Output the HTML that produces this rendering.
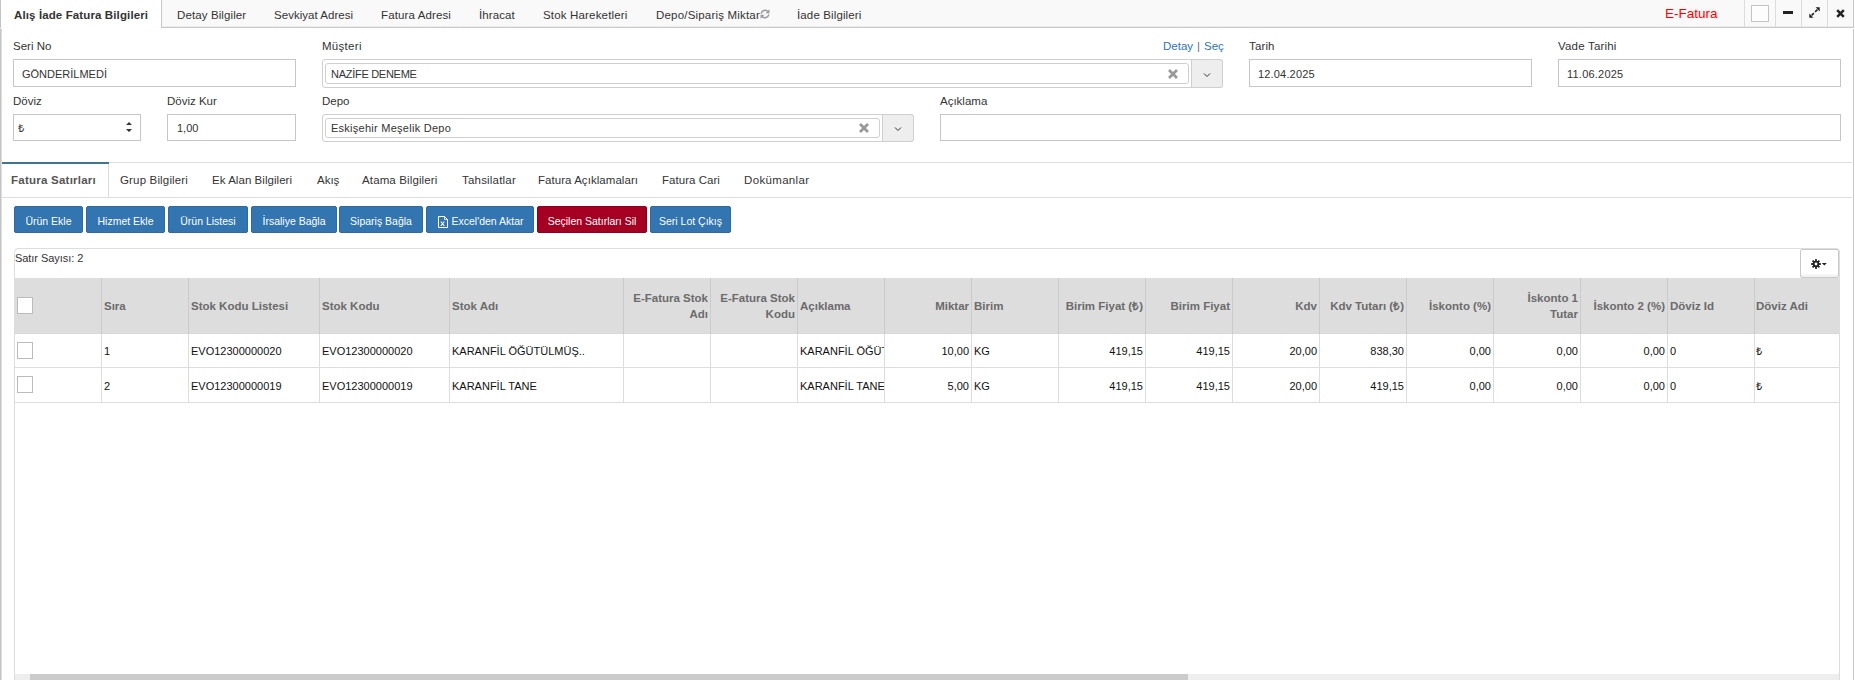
<!DOCTYPE html>
<html><head><meta charset="utf-8">
<style>
*{box-sizing:border-box}
html,body{margin:0;padding:0}
body{width:1855px;height:680px;overflow:hidden;background:#fff;position:relative;font-family:"Liberation Sans",sans-serif;font-size:11px;color:#333}
.a{position:absolute;white-space:nowrap}
.t{line-height:13px}
.box{position:absolute;border:1px solid #c6c6c6;background:#fff}
.lbl{position:absolute;white-space:nowrap;line-height:13px;font-size:11.5px;color:#333}
.val{position:absolute;white-space:nowrap;line-height:13px;font-size:11px;color:#333}
.btn{position:absolute;top:206px;height:27px;background:#3275b0;border:1px solid #2c6aa0;color:#fff;font-size:10.5px;line-height:27px;padding-top:1px;text-align:center;border-radius:2px}
.hd{position:absolute;font-weight:bold;color:#6b6b6b;font-size:11.5px;line-height:16px;white-space:nowrap}
.cell{position:absolute;font-size:11px;color:#111;line-height:13px;white-space:nowrap}
.vs{position:absolute;width:1px}
</style></head><body>

<!-- modal borders -->
<div class="a" style="left:0;top:0;width:1px;height:680px;background:#c4c4c4"></div>
<div class="a" style="left:1px;top:0;width:1px;height:680px;background:#dedede"></div>
<div class="a" style="left:0;top:28px;width:2px;height:1px;background:#eee"></div>
<div class="a" style="left:1853px;top:29px;width:1px;height:651px;background:#c8c8c8"></div>

<!-- top tab bar -->
<div class="a" style="left:0;top:0;width:1854px;height:28px;background:#f9f9f9;border-bottom:1px solid #c8c8c8;border-right:1px solid #c8c8c8"></div>
<div class="a" style="left:0;top:26px;width:1853px;height:1px;background:#ededed"></div>
<div class="a" style="left:0;top:0;width:162px;height:28px;background:#fff;border-right:1px solid #c8c8c8;border-left:1px solid #c4c4c4"></div>
<div class="a t" style="left:14px;top:9px;font-size:11.5px;font-weight:bold;color:#333;letter-spacing:0.12px">Alış İade Fatura Bilgileri</div>
<div class="a t" style="left:177px;top:9px;font-size:11.5px;letter-spacing:0.11px">Detay Bilgiler</div>
<div class="a t" style="left:274px;top:9px;font-size:11.5px;letter-spacing:0.03px">Sevkiyat Adresi</div>
<div class="a t" style="left:381px;top:9px;font-size:11.5px;letter-spacing:0.12px">Fatura Adresi</div>
<div class="a t" style="left:479px;top:9px;font-size:11.5px;letter-spacing:0.11px">İhracat</div>
<div class="a t" style="left:543px;top:9px;font-size:11.5px;letter-spacing:0.17px">Stok Hareketleri</div>
<div class="a t" style="left:656px;top:9px;font-size:11.5px;letter-spacing:0.19px">Depo/Sipariş Miktar</div>
<svg class="a" style="left:759px;top:8px" width="12" height="12" viewBox="0 0 12 12"><path d="M2.2 5.6A3.9 3.9 0 0 1 9 3.6" fill="none" stroke="#9a9a9a" stroke-width="1.5"/><path d="M10.5 1.2v4h-4z" fill="#9a9a9a"/><path d="M9.8 6.4A3.9 3.9 0 0 1 3 8.4" fill="none" stroke="#9a9a9a" stroke-width="1.5"/><path d="M1.5 10.8v-4h4z" fill="#9a9a9a"/></svg>
<div class="a t" style="left:797px;top:9px;font-size:11.5px;letter-spacing:0.13px">İade Bilgileri</div>
<div class="a" style="left:1665px;top:5px;font-size:13.5px;line-height:17px;color:#f00">E-Fatura</div>

<!-- window buttons -->
<div class="a" style="left:1744px;top:0;width:1px;height:27px;background:#dcdcdc"></div>
<div class="a" style="left:1775px;top:0;width:1px;height:27px;background:#dcdcdc"></div>
<div class="a" style="left:1801px;top:0;width:1px;height:27px;background:#dcdcdc"></div>
<div class="a" style="left:1827px;top:0;width:1px;height:27px;background:#dcdcdc"></div>
<div class="a" style="left:1751px;top:5px;width:18px;height:17px;border:1px solid #c4c4c4;background:#fdfdfd"></div>
<div class="a" style="left:1783px;top:11px;width:10px;height:3px;background:#222"></div>
<svg class="a" style="left:1808px;top:6px" width="13" height="13" viewBox="0 0 13 13"><path d="M3.6 9.4L5.9 7.1M7.1 5.9L9.4 3.6" stroke="#222" stroke-width="1.5"/><path d="M7.6 1.3h4.1v4.1z M1.3 7.6v4.1h4.1z" fill="#222"/></svg>
<svg class="a" style="left:1835px;top:8px" width="11" height="11" viewBox="0 0 11 11"><path d="M2.2 2.2L8.8 8.8M8.8 2.2L2.2 8.8" stroke="#222" stroke-width="2.5"/></svg>

<!-- form row 1 -->
<div class="lbl" style="left:13px;top:40px">Seri No</div>
<div class="box" style="left:13px;top:59px;width:283px;height:28px"></div>
<div class="val" style="left:22px;top:68px">GÖNDERİLMEDİ</div>

<div class="lbl" style="left:322px;top:40px;letter-spacing:0.29px">Müşteri</div>
<div class="a t" style="left:1163px;top:40px;font-size:11.5px;color:#2f74bd">Detay</div>
<div class="a t" style="left:1197px;top:40px;font-size:11.5px;color:#5a6f88">|</div>
<div class="a t" style="left:1204px;top:40px;font-size:11.5px;color:#2f74bd">Seç</div>
<div class="box" style="left:322px;top:59px;width:901px;height:29px;border-radius:3px;border-color:#cfcfcf"></div>
<div class="box" style="left:325px;top:63px;width:864px;height:21px;border-radius:3px;border-color:#cfcfcf"></div>
<div class="val" style="left:331px;top:68px;letter-spacing:-0.28px">NAZİFE DENEME</div>
<svg class="a" style="left:1168px;top:69px" width="10" height="10" viewBox="0 0 10 10"><path d="M2 2L8 8M8 2L2 8" stroke="#999" stroke-width="2.8" stroke-linecap="square"/></svg>
<div class="a" style="left:1191px;top:59px;width:32px;height:29px;background:#eee;border:1px solid #cfcfcf;border-radius:0 3px 3px 0"></div>
<svg class="a" style="left:1203px;top:72px" width="8" height="6" viewBox="0 0 8 6"><path d="M1 1.5L4 4.5L7 1.5" fill="none" stroke="#333" stroke-width="1"/></svg>

<div class="lbl" style="left:1249px;top:40px;letter-spacing:0.14px">Tarih</div>
<div class="box" style="left:1249px;top:59px;width:283px;height:28px"></div>
<div class="val" style="left:1258px;top:68px;letter-spacing:0.17px">12.04.2025</div>

<div class="lbl" style="left:1558px;top:40px;letter-spacing:0.19px">Vade Tarihi</div>
<div class="box" style="left:1558px;top:59px;width:283px;height:28px"></div>
<div class="val" style="left:1567px;top:68px;letter-spacing:0.22px">11.06.2025</div>

<!-- form row 2 -->
<div class="lbl" style="left:13px;top:95px">Döviz</div>
<div class="box" style="left:13px;top:114px;width:128px;height:27px"></div>
<div class="val" style="left:18px;top:122px">₺</div>
<svg class="a" style="left:125px;top:120px" width="8" height="14" viewBox="0 0 8 14"><path d="M1 5L4 2L7 5z M1 9L4 12L7 9z" fill="#333"/></svg>

<div class="lbl" style="left:167px;top:95px">Döviz Kur</div>
<div class="box" style="left:167px;top:114px;width:129px;height:27px"></div>
<div class="val" style="left:177px;top:122px">1,00</div>

<div class="lbl" style="left:322px;top:95px">Depo</div>
<div class="box" style="left:322px;top:114px;width:592px;height:28px;border-radius:3px;border-color:#cfcfcf"></div>
<div class="box" style="left:325px;top:118px;width:555px;height:20px;border-radius:3px;border-color:#cfcfcf"></div>
<div class="val" style="left:331px;top:122px;letter-spacing:0.26px">Eskişehir Meşelik Depo</div>
<svg class="a" style="left:859px;top:123px" width="10" height="10" viewBox="0 0 10 10"><path d="M2 2L8 8M8 2L2 8" stroke="#999" stroke-width="2.8" stroke-linecap="square"/></svg>
<div class="a" style="left:882px;top:114px;width:32px;height:28px;background:#eee;border:1px solid #cfcfcf;border-radius:0 3px 3px 0"></div>
<svg class="a" style="left:894px;top:126px" width="8" height="6" viewBox="0 0 8 6"><path d="M1 1.5L4 4.5L7 1.5" fill="none" stroke="#333" stroke-width="1"/></svg>

<div class="lbl" style="left:940px;top:95px">Açıklama</div>
<div class="box" style="left:940px;top:114px;width:901px;height:27px"></div>

<!-- second tab bar -->
<div class="a" style="left:2px;top:162px;width:1850px;height:1px;background:#ddd"></div>
<div class="a" style="left:2px;top:197px;width:1850px;height:1px;background:#ddd"></div>
<div class="a" style="left:2px;top:162px;width:107px;height:2px;background:#3e7590"></div>
<div class="a" style="left:108px;top:164px;width:1px;height:33px;background:#ddd"></div>
<div class="a t" style="left:11px;top:174px;font-size:11.5px;font-weight:bold;color:#555;letter-spacing:0.24px">Fatura Satırları</div>
<div class="a t" style="left:120px;top:174px;font-size:11.5px;letter-spacing:0.16px">Grup Bilgileri</div>
<div class="a t" style="left:212px;top:174px;font-size:11.5px;letter-spacing:0.05px">Ek Alan Bilgileri</div>
<div class="a t" style="left:317px;top:174px;font-size:11.5px">Akış</div>
<div class="a t" style="left:362px;top:174px;font-size:11.5px;letter-spacing:0.13px">Atama Bilgileri</div>
<div class="a t" style="left:462px;top:174px;font-size:11.5px;letter-spacing:0.2px">Tahsilatlar</div>
<div class="a t" style="left:538px;top:174px;font-size:11.5px;letter-spacing:0.05px">Fatura Açıklamaları</div>
<div class="a t" style="left:662px;top:174px;font-size:11.5px;letter-spacing:0.04px">Fatura Cari</div>
<div class="a t" style="left:744px;top:174px;font-size:11.5px;letter-spacing:0.34px">Dokümanlar</div>

<!-- buttons -->
<div class="btn" style="left:14px;width:69px">Ürün Ekle</div>
<div class="btn" style="left:86px;width:79px">Hizmet Ekle</div>
<div class="btn" style="left:168px;width:80px">Ürün Listesi</div>
<div class="btn" style="left:251px;width:86px">İrsaliye Bağla</div>
<div class="btn" style="left:339px;width:84px">Sipariş Bağla</div>
<div class="btn" style="left:426px;width:108px"><svg style="vertical-align:-3px;margin-right:3px;margin-left:2px" width="10" height="12" viewBox="0 0 10 12"><path d="M0.5 0.5h6l3 3v8h-9z" fill="none" stroke="#fff" stroke-width="1"/><path d="M6.5 0.5v3h3" fill="none" stroke="#fff" stroke-width="0.8"/><path d="M2.8 5.5l3.5 4.5M6.3 5.5l-3.5 4.5" stroke="#fff" stroke-width="1.1"/></svg>Excel'den Aktar</div>
<div class="btn" style="left:537px;width:110px;background:#a50022;border-color:#8e001c">Seçilen Satırları Sil</div>
<div class="btn" style="left:650px;width:81px">Seri Lot Çıkış</div>

<!-- table container -->
<div class="a" style="left:14px;top:248px;width:1826px;height:440px;border:1px solid #ddd;border-radius:4px"></div>
<div class="a t" style="left:15px;top:252px;font-size:11px;letter-spacing:-0.05px">Satır Sayısı: 2</div>
<div class="a" style="left:1800px;top:249px;width:39px;height:29px;background:linear-gradient(#fff 0,#fff 24px,#f2f2f2 25px);border:1px solid #c8c8c8;border-radius:2px"></div>
<svg class="a" style="left:1810px;top:258px" width="18" height="12" viewBox="0 0 18 12"><g fill="#222"><circle cx="6" cy="6" r="3.2"/><rect x="5.1" y="1.1" width="1.8" height="9.8"/><rect x="1.1" y="5.1" width="9.8" height="1.8"/><rect x="5.1" y="1.1" width="1.8" height="9.8" transform="rotate(45 6 6)"/><rect x="5.1" y="1.1" width="1.8" height="9.8" transform="rotate(-45 6 6)"/></g><circle cx="6" cy="6" r="1.4" fill="#fff"/><path d="M11.8 5h5l-2.5 2.6z" fill="#222"/></svg>

<!-- header -->
<div class="a" style="left:15px;top:278px;width:1824px;height:56px;background:#ddd"></div>
<div class="a" style="left:15px;top:333px;width:1824px;height:1px;background:#d8d8d8"></div>
<div class="a" style="left:15px;top:367px;width:1824px;height:1px;background:#ddd"></div>
<div class="a" style="left:15px;top:402px;width:1824px;height:1px;background:#ddd"></div>

<!--COLS-->
<div class="vs" style="left:101px;top:278px;height:56px;background:#cbcbcb"></div>
<div class="vs" style="left:101px;top:334px;height:68px;background:#ddd"></div>
<div class="vs" style="left:188px;top:278px;height:56px;background:#cbcbcb"></div>
<div class="vs" style="left:188px;top:334px;height:68px;background:#ddd"></div>
<div class="vs" style="left:319px;top:278px;height:56px;background:#cbcbcb"></div>
<div class="vs" style="left:319px;top:334px;height:68px;background:#ddd"></div>
<div class="vs" style="left:449px;top:278px;height:56px;background:#cbcbcb"></div>
<div class="vs" style="left:449px;top:334px;height:68px;background:#ddd"></div>
<div class="vs" style="left:623px;top:278px;height:56px;background:#cbcbcb"></div>
<div class="vs" style="left:623px;top:334px;height:68px;background:#ddd"></div>
<div class="vs" style="left:710px;top:278px;height:56px;background:#cbcbcb"></div>
<div class="vs" style="left:710px;top:334px;height:68px;background:#ddd"></div>
<div class="vs" style="left:797px;top:278px;height:56px;background:#cbcbcb"></div>
<div class="vs" style="left:797px;top:334px;height:68px;background:#ddd"></div>
<div class="vs" style="left:884px;top:278px;height:56px;background:#cbcbcb"></div>
<div class="vs" style="left:884px;top:334px;height:68px;background:#ddd"></div>
<div class="vs" style="left:971px;top:278px;height:56px;background:#cbcbcb"></div>
<div class="vs" style="left:971px;top:334px;height:68px;background:#ddd"></div>
<div class="vs" style="left:1058px;top:278px;height:56px;background:#cbcbcb"></div>
<div class="vs" style="left:1058px;top:334px;height:68px;background:#ddd"></div>
<div class="vs" style="left:1145px;top:278px;height:56px;background:#cbcbcb"></div>
<div class="vs" style="left:1145px;top:334px;height:68px;background:#ddd"></div>
<div class="vs" style="left:1232px;top:278px;height:56px;background:#cbcbcb"></div>
<div class="vs" style="left:1232px;top:334px;height:68px;background:#ddd"></div>
<div class="vs" style="left:1319px;top:278px;height:56px;background:#cbcbcb"></div>
<div class="vs" style="left:1319px;top:334px;height:68px;background:#ddd"></div>
<div class="vs" style="left:1406px;top:278px;height:56px;background:#cbcbcb"></div>
<div class="vs" style="left:1406px;top:334px;height:68px;background:#ddd"></div>
<div class="vs" style="left:1493px;top:278px;height:56px;background:#cbcbcb"></div>
<div class="vs" style="left:1493px;top:334px;height:68px;background:#ddd"></div>
<div class="vs" style="left:1580px;top:278px;height:56px;background:#cbcbcb"></div>
<div class="vs" style="left:1580px;top:334px;height:68px;background:#ddd"></div>
<div class="vs" style="left:1667px;top:278px;height:56px;background:#cbcbcb"></div>
<div class="vs" style="left:1667px;top:334px;height:68px;background:#ddd"></div>
<div class="vs" style="left:1754px;top:278px;height:56px;background:#cbcbcb"></div>
<div class="vs" style="left:1754px;top:334px;height:68px;background:#ddd"></div>
<div class="hd" style="left:104px;top:298px">Sıra</div>
<div class="hd" style="left:191px;top:298px">Stok Kodu Listesi</div>
<div class="hd" style="left:322px;top:298px">Stok Kodu</div>
<div class="hd" style="left:452px;top:298px">Stok Adı</div>
<div class="hd" style="right:1147px;top:290px;text-align:right">E-Fatura Stok<br>Adı</div>
<div class="hd" style="right:1060px;top:290px;text-align:right">E-Fatura Stok<br>Kodu</div>
<div class="hd" style="left:800px;top:298px">Açıklama</div>
<div class="hd" style="right:886px;top:298px;text-align:right">Miktar</div>
<div class="hd" style="left:974px;top:298px">Birim</div>
<div class="hd" style="right:712px;top:298px;text-align:right">Birim Fiyat (₺)</div>
<div class="hd" style="right:625px;top:298px;text-align:right">Birim Fiyat</div>
<div class="hd" style="right:538px;top:298px;text-align:right">Kdv</div>
<div class="hd" style="right:451px;top:298px;text-align:right">Kdv Tutarı (₺)</div>
<div class="hd" style="right:364px;top:298px;text-align:right">İskonto (%)</div>
<div class="hd" style="right:277px;top:290px;text-align:right">İskonto 1<br>Tutar</div>
<div class="hd" style="right:190px;top:298px;text-align:right">İskonto 2 (%)</div>
<div class="hd" style="left:1670px;top:298px">Döviz Id</div>
<div class="hd" style="left:1756px;top:298px">Döviz Adi</div>
<div class="cell" style="left:104px;top:345px">1</div>
<div class="cell" style="left:191px;top:345px">EVO12300000020</div>
<div class="cell" style="left:322px;top:345px">EVO12300000020</div>
<div class="cell" style="left:452px;top:345px">KARANFİL ÖĞÜTÜLMÜŞ..</div>
<div class="cell" style="left:800px;top:345px;width:84px;overflow:hidden">KARANFİL ÖĞÜTÜLMÜŞ</div>
<div class="cell" style="right:886px;top:345px">10,00</div>
<div class="cell" style="left:974px;top:345px">KG</div>
<div class="cell" style="right:712px;top:345px">419,15</div>
<div class="cell" style="right:625px;top:345px">419,15</div>
<div class="cell" style="right:538px;top:345px">20,00</div>
<div class="cell" style="right:451px;top:345px">838,30</div>
<div class="cell" style="right:364px;top:345px">0,00</div>
<div class="cell" style="right:277px;top:345px">0,00</div>
<div class="cell" style="right:190px;top:345px">0,00</div>
<div class="cell" style="left:1670px;top:345px">0</div>
<div class="cell" style="left:1756px;top:345px">₺</div>
<div class="cell" style="left:104px;top:380px">2</div>
<div class="cell" style="left:191px;top:380px">EVO12300000019</div>
<div class="cell" style="left:322px;top:380px">EVO12300000019</div>
<div class="cell" style="left:452px;top:380px">KARANFİL TANE</div>
<div class="cell" style="left:800px;top:380px;width:84px;overflow:hidden">KARANFİL TANE</div>
<div class="cell" style="right:886px;top:380px">5,00</div>
<div class="cell" style="left:974px;top:380px">KG</div>
<div class="cell" style="right:712px;top:380px">419,15</div>
<div class="cell" style="right:625px;top:380px">419,15</div>
<div class="cell" style="right:538px;top:380px">20,00</div>
<div class="cell" style="right:451px;top:380px">419,15</div>
<div class="cell" style="right:364px;top:380px">0,00</div>
<div class="cell" style="right:277px;top:380px">0,00</div>
<div class="cell" style="right:190px;top:380px">0,00</div>
<div class="cell" style="left:1670px;top:380px">0</div>
<div class="cell" style="left:1756px;top:380px">₺</div>
<!--/COLS-->

<!-- checkbox -->
<div class="a" style="left:17px;top:297px;width:16px;height:17px;border:1px solid #bbb;background:#fff"></div>
<div class="a" style="left:17px;top:342px;width:16px;height:17px;border:1px solid #bbb;background:#fff"></div>
<div class="a" style="left:17px;top:376px;width:16px;height:17px;border:1px solid #bbb;background:#fff"></div>

<!-- scrollbar -->
<div class="a" style="left:15px;top:674px;width:1824px;height:6px;background:#eee"></div>
<div class="a" style="left:30px;top:674px;width:1158px;height:6px;background:#cbcbcb"></div>

</body></html>
